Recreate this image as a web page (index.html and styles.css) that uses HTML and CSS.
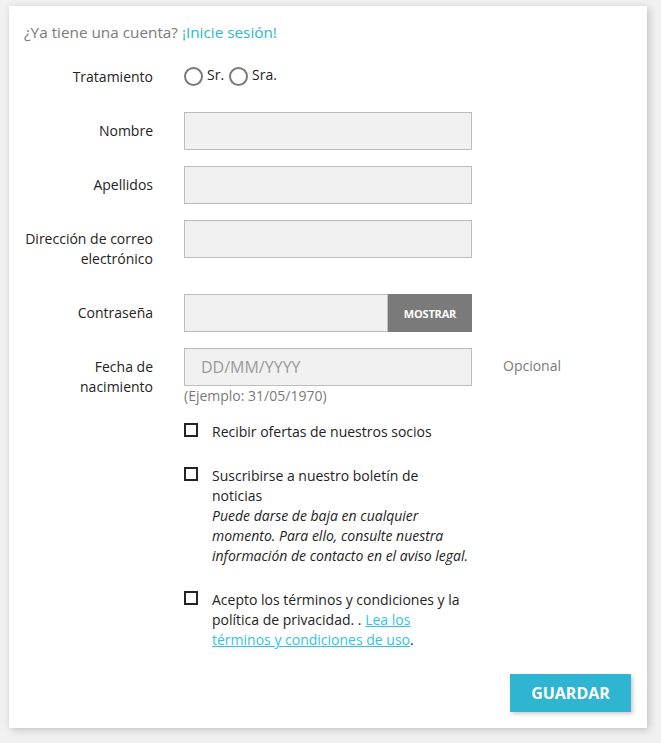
FILE: index.html
```html
<!DOCTYPE html>
<html lang="es">
<head>
<meta charset="utf-8">
<title>Crear una cuenta</title>
<link rel="stylesheet" href="styles.css">
</head>
<body>
<div class="card">
  <p class="no-account">¿Ya tiene una cuenta? <a href="#" class="login-link">¡Inicie sesión!</a></p>
  <form class="form">
    <div class="row">
      <label class="lbl">Tratamiento</label>
      <div class="field radios">
        <span class="radio"><span class="circle"></span><span class="radio-text">Sr.</span></span>
        <span class="radio"><span class="circle"></span><span class="radio-text">Sra.</span></span>
      </div>
    </div>
    <div class="row">
      <label class="lbl">Nombre</label>
      <div class="field"><input class="input" type="text"></div>
    </div>
    <div class="row">
      <label class="lbl">Apellidos</label>
      <div class="field"><input class="input" type="text"></div>
    </div>
    <div class="row">
      <label class="lbl">Dirección de correo electrónico</label>
      <div class="field"><input class="input" type="email"></div>
    </div>
    <div class="row">
      <label class="lbl">Contraseña</label>
      <div class="field pass">
        <input class="input pass-input" type="password">
        <button type="button" class="show-btn">MOSTRAR</button>
      </div>
    </div>
    <div class="row">
      <label class="lbl">Fecha de nacimiento</label>
      <div class="field">
        <input class="input date-input" type="text" placeholder="DD/MM/YYYY">
        <span class="hint">(Ejemplo: 31/05/1970)</span>
      </div>
      <div class="comment">Opcional</div>
    </div>
    <div class="row row-check">
      <div class="check">
        <span class="box"></span>
        <span class="check-text">Recibir ofertas de nuestros socios</span>
      </div>
    </div>
    <div class="row row-check">
      <div class="check">
        <span class="box"></span>
        <span class="check-text">Suscribirse a nuestro boletín de noticias<em class="note">Puede darse de baja en cualquier momento. Para ello, consulte nuestra información de contacto en el aviso legal.</em></span>
      </div>
    </div>
    <div class="row row-check">
      <div class="check">
        <span class="box"></span>
        <span class="check-text"><span>Acepto los términos y condiciones y la</span> <span>política de privacidad. .</span> <a href="#" class="terms-link">Lea los</a> <a href="#" class="terms-link">términos y condiciones de uso</a>.</span>
      </div>
    </div>
    <div class="actions">
      <button type="submit" class="save-btn">GUARDAR</button>
    </div>
  </form>
</div>
</body>
</html>
```
FILE: styles.css
```css
* { box-sizing: border-box; }

html, body {
  margin: 0;
  padding: 0;
  background: #f1f1f1;
}

body {
  font-family: "Open Sans", "Noto Sans", sans-serif;
  font-size: 14px;
  line-height: 20px;
  color: #232323;
  padding: 6px 14px 15px 9px;
}

.card {
  width: 638px;
  background: #fff;
  box-shadow: 2px 2px 8px 0 rgba(0, 0, 0, 0.2);
  padding: 16px 16px 16px 15px;
}

.no-account {
  margin: 0 0 16px;
  color: #7a7a7a;
  font-size: 15.3px;
}

.login-link {
  color: #2fb5d2;
  text-decoration: none;
}

.form {
  margin: 0 0 0 -1px;
}

.row {
  display: grid;
  grid-template-columns: 130px 288px 1fr;
  column-gap: 31px;
  margin-bottom: 16px;
  align-items: start;
}

.lbl {
  text-align: right;
  padding: 9px 0;
  color: #232323;
}

.field {
  display: flex;
  flex-direction: column;
}

.radios {
  flex-direction: row;
  align-items: flex-start;
  padding-top: 7px;
  height: 38px;
}

.radio {
  display: flex;
  align-items: flex-start;
  margin-right: 5px;
}

.circle {
  width: 19px;
  height: 19px;
  border: 2px solid #7a7a7a;
  border-radius: 50%;
  margin-top: 2px;
  margin-right: 4px;
}

.input {
  height: 38px;
  width: 100%;
  border: 1px solid #bdbdbd;
  background: #f1f1f1;
  font-family: inherit;
  font-size: 16px;
  padding: 0 16px;
  color: #232323;
  outline: none;
  margin: 0;
}

.input::placeholder {
  color: #9a9a9a;
}

.pass {
  flex-direction: row;
}

.pass-input {
  width: 204px;
  flex: none;
}

.show-btn {
  width: 84px;
  height: 38px;
  border: none;
  background: #7a7a7a;
  color: #fff;
  font-family: inherit;
  font-weight: 700;
  font-size: 11px;
  letter-spacing: -0.2px;
  padding: 0;
  margin: 0;
}

.hint {
  color: #7a7a7a;
}

.comment {
  padding-top: 8px;
  color: #7a7a7a;
}

.row-check {
  margin-bottom: 24px;
}

.check {
  grid-column: 2;
  display: flex;
  align-items: flex-start;
  line-height: 20px;
}

.box {
  flex: none;
  width: 14px;
  height: 14px;
  border: 2px solid #232323;
  margin-top: 1px;
  margin-right: 14px;
}

.check-text {
  width: 260px;
}

.note {
  display: block;
  font-style: italic;
}

.terms-link {
  color: #2ec4e6;
  text-decoration: underline;
}

.actions {
  display: flex;
  justify-content: flex-end;
  margin-left: 1px;
  margin-top: 0;
}

.save-btn {
  width: 121px;
  height: 38px;
  border: none;
  background: #2fb5d2;
  color: #fff;
  font-family: inherit;
  font-weight: 700;
  font-size: 16px;
  box-shadow: 2px 2px 4px 0 rgba(0, 0, 0, 0.2);
  padding: 0;
  margin: 0;
}
```
